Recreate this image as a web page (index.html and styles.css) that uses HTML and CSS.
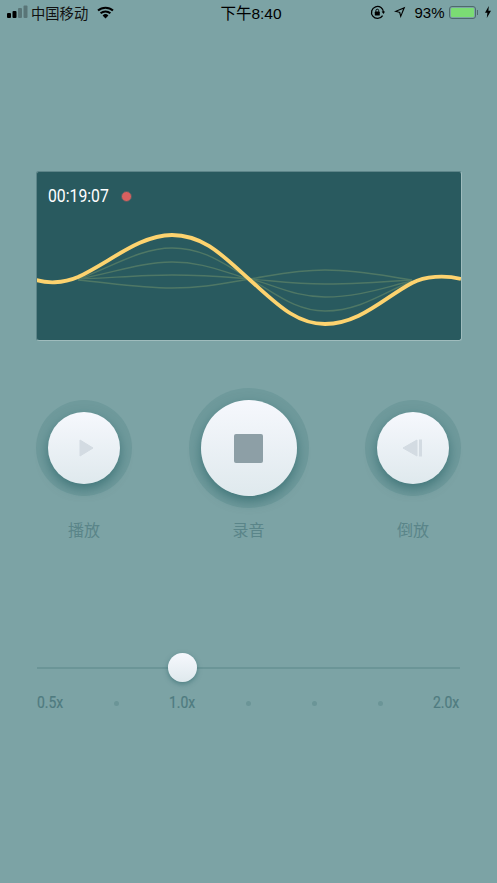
FILE: index.html
```html
<!DOCTYPE html>
<html>
<head>
  <title>录音</title>
  <link rel="stylesheet" href="styles.css">
</head>
<body>
  <div class="status-bar">
    <div class="status-left">
      <svg class="signal" width="21" height="14" viewBox="0 0 21 14">
        <rect x="0" y="8" width="4" height="5" rx="1" fill="#000"/>
        <rect x="5.5" y="6" width="4" height="7" rx="1" fill="#000"/>
        <rect x="11" y="3" width="4" height="10" rx="1" fill="#000" opacity="0.28"/>
        <rect x="16.5" y="0.5" width="4" height="12.5" rx="1" fill="#000" opacity="0.28"/>
      </svg>
      <span class="carrier">中国移动</span>
      <svg class="wifi" width="17" height="13" viewBox="0 0 17 13">
        <path d="M1 4.6 A11 11 0 0 1 16 4.6 M3.6 7.3 A7.4 7.4 0 0 1 13.4 7.3" fill="none" stroke="#000" stroke-width="2"/>
        <path d="M5.6 9.4 A4.3 4.3 0 0 1 11.4 9.4 L8.5 12.6 Z" fill="#000"/>
      </svg>
    </div>
    <div class="status-time">下午8:40</div>
    <div class="status-right">
      <svg width="15" height="15" viewBox="0 0 15 15">
        <path d="M12.6 10.6 A6 6 0 1 1 13.5 7.5" fill="none" stroke="#000" stroke-width="1.3"/>
        <path d="M11.6 6.6 H15 L13.5 9 Z" fill="#000"/>
        <rect x="4.8" y="6.6" width="5" height="4" rx="0.6" fill="#000"/>
        <path d="M5.9 6.8 V5.6 A1.4 1.4 0 0 1 8.7 5.6 V6.8" fill="none" stroke="#000" stroke-width="1"/>
      </svg>
      <svg class="arrow" width="13" height="13" viewBox="0 0 13 13">
        <path d="M12.3 0.8 L7.6 12 L6.2 6.8 L1 5.4 Z M10 3.1 L4.2 5.2 L7.2 5.9 L7.9 8.8 Z" fill="#000" fill-rule="evenodd"/>
      </svg>
      <span class="percent">93%</span>
      <span class="battery"><span class="battery-fill"></span></span>
      <span class="battery-cap"></span>
      <svg class="bolt" width="6" height="12" viewBox="0 0 6 12">
        <path d="M3.8 0 L0 6.8 H2.4 L1.8 12 L6 4.8 H3.4 Z" fill="#000"/>
      </svg>
    </div>
  </div>

  <div class="wave-panel">
    <div class="timer">
      <span class="timer-text">00:19:07</span>
      <span class="rec-dot"></span>
    </div>
    <svg class="wave" width="424" height="168" viewBox="37 172 424 168">
      <g fill="none" stroke="#5f8468" stroke-width="1.4" opacity="0.7">
        <path d="M78 279 C110 268,140 248,172 248 C205 248,225 265,250 279 C275 293,295 311,325 311 C360 311,385 292,412 281"/>
        <path d="M78 279 C110 274,140 262,172 262 C205 262,225 273,250 279 C275 285,295 297,325 297 C360 297,385 287,412 281"/>
        <path d="M78 279 C110 278,140 275,172 275 C205 275,225 277,250 279 C275 281,295 284,325 284 C360 284,385 282,412 280"/>
        <path d="M78 280 C110 283,140 288,172 288 C205 288,225 283,250 279 C275 275,295 270,325 270 C360 270,385 276,412 280"/>
      </g>
      <path d="M36 280 C46 283,62 284,78 277 C110 262,140 235,172 235 C205 235,225 258,250 280 C275 302,295 324,325 324 C360 324,385 297,412 283 C425 276,445 275,461 279" fill="none" stroke="#fdd36f" stroke-width="3.8"/>
    </svg>
  </div>

  <div class="controls">
    <div class="control">
      <div class="ring">
        <div class="knob">
          <svg class="play-icon" width="15" height="18" viewBox="0 0 15 18"><path d="M1 1 L14 9 L1 17 Z" fill="#d3dbe2" stroke="#d3dbe2" stroke-linejoin="round"/></svg>
        </div>
      </div>
      <div class="control-label">播放</div>
    </div>
    <div class="control">
      <div class="ring ring-large">
        <div class="knob">
          <span class="stop-icon"></span>
        </div>
      </div>
      <div class="control-label">录音</div>
    </div>
    <div class="control">
      <div class="ring">
        <div class="knob">
          <svg class="rewind-icon" width="20" height="18" viewBox="0 0 20 18"><path d="M15 1 L1 9 L15 17 Z" fill="#d3dbe2" stroke="#d3dbe2" stroke-linejoin="round"/><rect x="17" y="0.5" width="3" height="17" fill="#d3dbe2"/></svg>
        </div>
      </div>
      <div class="control-label">倒放</div>
    </div>
  </div>

  <div class="speed">
    <div class="track">
      <div class="thumb"></div>
    </div>
    <div class="ticks">
      <span class="tick-label"><span>0.5x</span></span>
      <span class="tick-dot"></span>
      <span class="tick-label"><span>1.0x</span></span>
      <span class="tick-dot"></span>
      <span class="tick-dot"></span>
      <span class="tick-dot"></span>
      <span class="tick-label"><span>2.0x</span></span>
    </div>
  </div>
</body>
</html>
```

FILE: styles.css
```css
html, body {
  height: 100%;
}

body {
  margin: 0;
  overflow: hidden;
  background: #7ca3a5;
  font-family: "Liberation Sans", "Noto Sans CJK SC", sans-serif;
}

.status-bar {
  display: grid;
  grid-template-columns: 1fr auto 1fr;
  align-items: center;
  box-sizing: border-box;
  height: 26px;
  padding: 0 6px 2px 7px;
  color: #000;
  font-size: 15px;
}

.status-left, .status-right {
  display: flex;
  align-items: center;
}

.status-right {
  justify-content: flex-end;
}

.carrier {
  margin-left: 3px;
  font-size: 14.3px;
  color: #111;
}

.wifi {
  margin-left: 9px;
}

.status-time {
  margin-left: 4px;
  font-size: 15.5px;
}

.arrow {
  margin-left: 8px;
}

.percent {
  margin-left: 8px;
  font-size: 15px;
}

.battery {
  display: block;
  width: 27px;
  height: 13px;
  margin-left: 4px;
  padding: 1px;
  box-sizing: border-box;
  border: 1px solid #4f6a6c;
  border-radius: 3px;
}

.battery-fill {
  display: block;
  height: 100%;
  background: #7bdc74;
  border-radius: 1px;
}

.battery-cap {
  width: 1.5px;
  height: 5px;
  margin-left: 1px;
  background: #4f6a6c;
}

.bolt {
  margin-left: 7px;
}

.wave-panel {
  position: relative;
  width: 424px;
  height: 168px;
  margin: 145px 0 0 36px;
  background: #295a5f;
  border: 1px solid #9fbcbd;
  border-top-color: #5d8589;
  border-left-color: #5d8589;
  border-radius: 3px;
}

.wave {
  display: block;
}

.timer {
  position: absolute;
  top: 13px;
  left: 11px;
  display: flex;
  align-items: center;
  color: #fff;
}

.timer-text {
  display: block;
  width: 60px;
  font-family: Roboto, "Liberation Sans", sans-serif;
  font-size: 19px;
  line-height: 22px;
  white-space: nowrap;
  transform: scaleX(0.83);
  transform-origin: left center;
}

.rec-dot {
  width: 9px;
  height: 9px;
  margin-left: 13px;
  background: #d8605f;
  border: 1px solid #4d5f62;
  border-radius: 50%;
}

.controls {
  display: flex;
  justify-content: space-between;
  padding: 0 36px;
  margin-top: 47px;
}

.control {
  display: grid;
  grid-template-rows: 120px auto;
  justify-items: center;
  align-items: center;
  gap: 12px;
}

.ring {
  display: flex;
  align-items: center;
  justify-content: center;
  width: 96px;
  height: 96px;
  background: #6f9a9c;
  border-radius: 50%;
}

.ring-large {
  width: 120px;
  height: 120px;
}

.knob {
  display: flex;
  align-items: center;
  justify-content: center;
  width: 72px;
  height: 72px;
  background: linear-gradient(#f6f8fd, #dfe9ed);
  border-radius: 50%;
  box-shadow: 0 5px 12px rgba(50, 105, 110, 0.75);
}

.ring-large .knob {
  width: 96px;
  height: 96px;
}

.play-icon {
  margin-left: 5px;
}

.rewind-icon {
  margin-right: 3px;
}

.stop-icon {
  display: block;
  width: 29px;
  height: 29px;
  background: #8d9fa6;
  border-radius: 2px;
}

.control-label {
  font-size: 16px;
  line-height: 22px;
  color: #5a8589;
}

.speed {
  padding: 0 37px;
  margin-top: 125px;
}

.track {
  position: relative;
  height: 2px;
  background: #6b9597;
}

.thumb {
  position: absolute;
  left: 131px;
  top: -14px;
  width: 29px;
  height: 29px;
  background: linear-gradient(#f6f8fd, #dfe9ed);
  border-radius: 50%;
  box-shadow: 0 2px 5px rgba(50, 105, 110, 0.6);
}

.ticks {
  display: grid;
  grid-template-columns: repeat(7, 66px);
  align-items: center;
  justify-items: center;
  margin: 24px 0 0 -20px;
}

.tick-label {
  font-family: Roboto, "Liberation Sans", sans-serif;
  font-size: 16px;
  line-height: 20px;
  color: #4f7b80;
  -webkit-text-stroke: 0.2px #4f7b80;
}

.tick-label span {
  display: inline-block;
  transform: scaleX(0.87);
}

.tick-dot {
  width: 5px;
  height: 5px;
  background: #6b9597;
  border-radius: 50%;
}
```
